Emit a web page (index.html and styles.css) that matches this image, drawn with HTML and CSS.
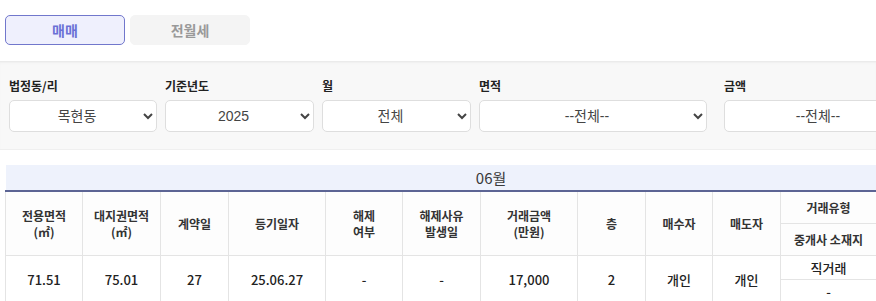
FILE: index.html
```html
<!DOCTYPE html>
<html>

<head>
  <meta charset="utf-8" />
  <meta name="viewport" content="width=device-width, initial-scale=1" />
  <title>실거래가 조회</title>
  <link rel="stylesheet" href="styles.css">
</head>

<body>
  <!-- 거래 구분 탭 -->
  <div class="tabs">
    <button class="tab active">매매</button>
    <button class="tab">전월세</button>
  </div>

  <!-- 검색 조건 -->
  <div class="filters">
    <div class="field field-dong">
      <label>법정동/리</label>
      <select>
        <option>목현동</option>
      </select>
    </div>
    <div class="field">
      <label>기준년도</label>
      <select>
        <option>2025</option>
      </select>
    </div>
    <div class="field">
      <label>월</label>
      <select>
        <option>전체</option>
      </select>
    </div>
    <div class="field field-wide">
      <label>면적</label>
      <select>
        <option>--전체--</option>
      </select>
    </div>
    <div class="field field-price">
      <label>금액</label>
      <select>
        <option>--전체--</option>
      </select>
    </div>
  </div>

  <!-- 거래 목록 -->
  <div class="table-wrap">
    <table class="deal-table">
      <colgroup>
        <col style="width: 77px">
        <col style="width: 78px">
        <col style="width: 68px">
        <col style="width: 97px">
        <col style="width: 77px">
        <col style="width: 78px">
        <col style="width: 97px">
        <col style="width: 68px">
        <col style="width: 67px">
        <col style="width: 68px">
        <col style="width: 96px">
        <col style="width: 100px">
      </colgroup>
      <thead>
        <tr>
          <th colspan="12" class="month">06월</th>
        </tr>
        <tr class="head-row">
          <th rowspan="2">전용면적<br>(㎡)</th>
          <th rowspan="2">대지권면적<br>(㎡)</th>
          <th rowspan="2">계약일</th>
          <th rowspan="2">등기일자</th>
          <th rowspan="2">해제<br>여부</th>
          <th rowspan="2">해제사유<br>발생일</th>
          <th rowspan="2">거래금액<br>(만원)</th>
          <th rowspan="2">층</th>
          <th rowspan="2">매수자</th>
          <th rowspan="2">매도자</th>
          <th class="sub">거래유형</th>
          <th rowspan="2"></th>
        </tr>
        <tr class="head-row">
          <th class="sub">중개사 소재지</th>
        </tr>
      </thead>
      <tbody>
        <tr class="data-row">
          <td rowspan="2">71.51</td>
          <td rowspan="2">75.01</td>
          <td rowspan="2">27</td>
          <td rowspan="2">25.06.27</td>
          <td rowspan="2">-</td>
          <td rowspan="2">-</td>
          <td rowspan="2">17,000</td>
          <td rowspan="2">2</td>
          <td rowspan="2">개인</td>
          <td rowspan="2">개인</td>
          <td class="sub">직거래</td>
          <td rowspan="2"></td>
        </tr>
        <tr class="data-row">
          <td class="sub">-</td>
        </tr>
      </tbody>
    </table>
  </div>
</body>

</html>
```

FILE: styles.css
```css
html,
body {
  margin: 0;
  overflow: hidden;
}

body {
  background: white;
  color: #333;
  font-family: "Malgun Gothic", "Noto Sans CJK KR", "Noto Sans", sans-serif;
  width: 876px;
}

.tabs {
  display: flex;
  gap: 5px;
  padding: 15px 5px 0;
  height: 30px;
}

.tab {
  width: 120px;
  height: 30px;
  border: 1px solid #f4f4f4;
  border-radius: 5px;
  background: #f4f4f4;
  color: #999;
  font-family: inherit;
  font-size: 14px;
  font-weight: bold;
  line-height: 1;
  cursor: pointer;
}

.tab.active {
  background: #eff0fd;
  border-color: #7177cc;
  color: #6a70d6;
}

.filters {
  margin-top: 16px;
  display: flex;
  gap: 8px;
  padding: 17px 0 17px 9px;
  background: #f8f8f8;
  box-shadow: inset 0 3px 3px -2px #e4e4e4;
  border-bottom: 1px solid #efefef;
  height: 54px;
}

.field {
  display: flex;
  flex-direction: column;
  width: 149px;
  flex-shrink: 0;
}

.field-dong {
  width: 148px;
}

.field-wide {
  width: 228px;
}

.field-price {
  width: 200px;
  margin-left: 9px;
}

.field label {
  font-size: 12px;
  font-weight: bold;
  color: #222;
  line-height: 16px;
  height: 22px;
}

.field select {
  height: 32px;
  width: 100%;
  background: white;
  border: 1px solid #dedede;
  border-radius: 5px;
  color: #444;
  font-family: Arial, "Liberation Sans", "Noto Sans CJK KR", sans-serif;
  font-size: 14px;
  text-align: center;
  text-align-last: center;
  padding: 0 6px;
}

.table-wrap {
  margin-top: 15px;
  padding-left: 5px;
}

.deal-table {
  border-collapse: collapse;
  table-layout: fixed;
  width: 971px;
  font-size: 12px;
}

.deal-table th,
.deal-table td {
  border: 1px solid #e4e4e4;
  text-align: center;
  padding: 0;
}

.month {
  background: #eef2fc;
  height: 25px;
  font-size: 15px;
  font-weight: normal;
  color: #3a3a3a;
  border: none !important;
  border-bottom: 2px solid #5c6494 !important;
}

.head-row th {
  height: 31px;
  font-weight: bold;
  line-height: 16px;
  color: #333;
  background: #fdfdfd;
}

.data-row td {
  height: 23px;
  font-size: 13px;
  font-weight: 500;
  color: #222;
}
```
